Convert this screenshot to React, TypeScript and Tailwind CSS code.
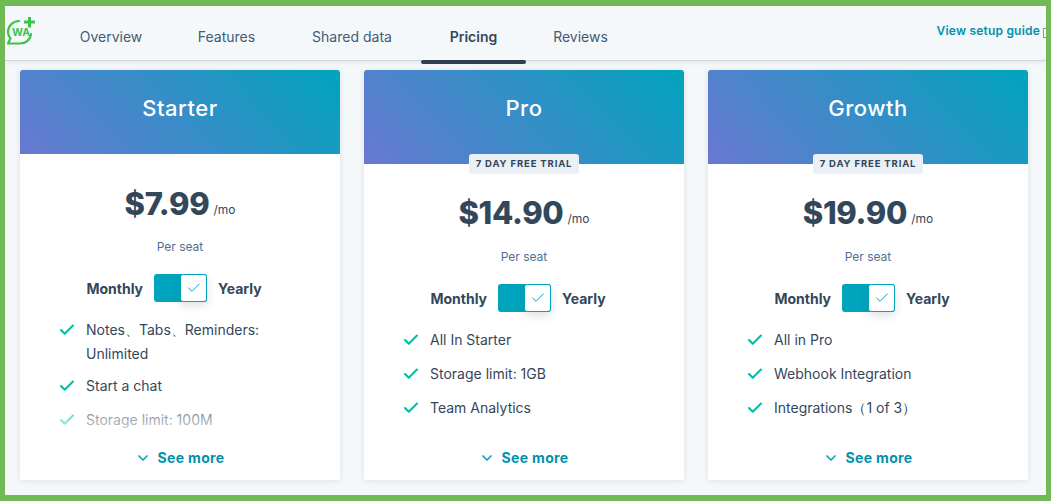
import { Check, ChevronDown } from "lucide-react"

interface Plan {
    name: string
    price: string
    trial: boolean
    features: string[]
}

const plans: Plan[] = [
    { name: "Starter", price: "$7.99", trial: false, features: ["Notes、Tabs、Reminders: Unlimited", "Start a chat", "Storage limit: 100M"] },
    { name: "Pro", price: "$14.90", trial: true, features: ["All In Starter", "Storage limit: 1GB", "Team Analytics"] },
    { name: "Growth", price: "$19.90", trial: true, features: ["All in Pro", "Webhook Integration", "Integrations（1 of 3）"] },
]

const tabs = [
    { label: "Overview", width: "w-[118px]" },
    { label: "Features", width: "w-[113px]" },
    { label: "Shared data", width: "w-[138px]" },
    { label: "Pricing", width: "w-[105px]" },
    { label: "Reviews", width: "w-[109px]" },
]

const Logo = () => {
    return (
        <div className="relative w-[30px] h-[30px] ml-px shrink-0">
            <svg width="30" height="30" viewBox="0 0 30 30" fill="none" stroke="#3cc14f" strokeWidth="2.2" strokeLinecap="round" strokeLinejoin="round">
                <path d="M13 5 C7 5 2 10 2 16 C2 19 3 21 4.5 22.5 L2 27.5 H14 C20 27.5 24.5 23.5 25 18" />
                <path d="M23.5 1 V11.5 M18 6 H29" strokeWidth="3" strokeLinecap="butt" />
            </svg>
            <span className="absolute left-[6px] top-[10px] text-[10.5px] leading-[13px] font-bold text-[#3cc14f]">WA</span>
        </div>
    )
}

const PlanCard = ({ plan }: { plan: Plan }) => {
    return (
        <div className="w-[320px] h-[410px] shrink-0 bg-white rounded-[3px] shadow-[0_1px_6px_rgba(45,62,80,0.12)] flex flex-col overflow-hidden">
            <div className={`bg-linear-[45deg] from-[#6a78d1] to-[#00a4bd] flex justify-center text-white text-[22px] leading-[28px] tracking-[0.5px] font-medium pt-6 shrink-0 ${plan.trial ? "h-[94px]" : "h-[84px]"}`}>
                {plan.name}
            </div>

            {plan.trial && (
                <div className="self-center -mt-[10px] h-5 w-[110px] rounded-[3px] bg-[#eaf0f6] flex items-center justify-center text-[9.5px] font-bold tracking-[0.85px] text-[#33475b] relative">
                    7 DAY FREE TRIAL
                </div>
            )}

            <div className={`flex items-end justify-center gap-1 h-12 text-[#33475b] ${plan.trial ? "mt-[15px]" : "mt-[26px]"}`}>
                <span className="text-[31px] leading-[48px] font-extrabold tracking-[-0.3px]">{plan.price}</span>
                <span className="text-[12px] leading-[20px] mb-[8px]">/mo</span>
            </div>

            <p className={`text-center text-[12px] leading-5 text-[#516f90] ${plan.trial ? "mt-2.5" : "mt-[9px]"}`}>Per seat</p>

            <div className="mt-[17px] pr-3 flex items-center justify-center gap-[11px] text-[14px] font-bold text-[#33475b]">
                <span>Monthly</span>
                <div className="w-[53px] h-7 rounded-[3px] bg-[#00a4bd] flex justify-end">
                    <div className="w-[27px] h-7 rounded-[3px] bg-white border border-[#00a4bd] flex items-center justify-center shadow-[0_4px_8px_rgba(45,62,80,0.15)]">
                        <Check size={16} strokeWidth={1.5} className="text-[#00a4bd]" />
                    </div>
                </div>
                <span>Yearly</span>
            </div>

            <div className="relative mt-4 flex-1 overflow-hidden px-10">
                <ul className="flex flex-col gap-2.5">
                    {plan.features.map((feature, index) => (
                        <li className={`flex gap-2.5 text-[14px] leading-6 text-[#33475b] ${!plan.trial && index === 0 ? "-mb-0.5" : ""}`} key={feature}>
                            <Check size={18} strokeWidth={2.75} className="text-[#00bda5] shrink-0 mt-[3px] -ml-0.5" />
                            <span className="w-[190px]">{feature}</span>
                        </li>
                    ))}
                </ul>
                {!plan.trial && <div className="absolute left-0 right-0 bottom-0 h-[60px] bg-linear-to-b from-white/0 to-white"></div>}
            </div>

            <div className="h-8 shrink-0 flex items-start justify-center gap-1.5 text-[14px] leading-5 tracking-[0.35px] font-bold text-[#0091ae]">
                <ChevronDown size={16} strokeWidth={2.5} className="text-[#00a4bd] mt-0.5" />
                <span>See more</span>
            </div>
        </div>
    )
}

const App = () => {
    return (
        <div className="w-[1051px] h-[501px] border-x-[5px] border-y-[6px] border-[#70b955] bg-[#f5f8fa] overflow-hidden font-['Inter',sans-serif]">
            <div className="h-[55px] flex items-start border-b border-[#cbd6e2] shadow-[0_1px_4px_rgba(45,62,80,0.1)]">
                <div className="w-[47px] pt-[10px] shrink-0"><Logo /></div>
                {tabs.map((tab) => (
                    <div className={`relative h-[58px] ${tab.width} pt-[21px] text-center text-[14px] leading-5 whitespace-nowrap ${tab.label === "Pricing" ? "font-semibold text-[#33475b]" : "text-[#425b76]"}`} key={tab.label}>
                        {tab.label}
                        {tab.label === "Pricing" && <div className="absolute left-0 right-0 bottom-0 h-1 rounded-full bg-[#2e3f50]"></div>}
                    </div>
                ))}
                <div className="ml-auto pt-4 flex items-center gap-[3px] text-[12px] leading-[18px] tracking-[0.2px] font-semibold text-[#0091ae] whitespace-nowrap">
                    View setup guide
                    <span className="w-[3px] h-2.5 mt-1 border border-[#7c98b6] rounded-l-[1px] border-r-0"></span>
                </div>
            </div>

            <div className="flex gap-6 pl-[15px] pt-[9px]">
                {plans.map((plan) => (
                    <PlanCard plan={plan} key={plan.name} />
                ))}
            </div>
        </div>
    )
}

export default App
